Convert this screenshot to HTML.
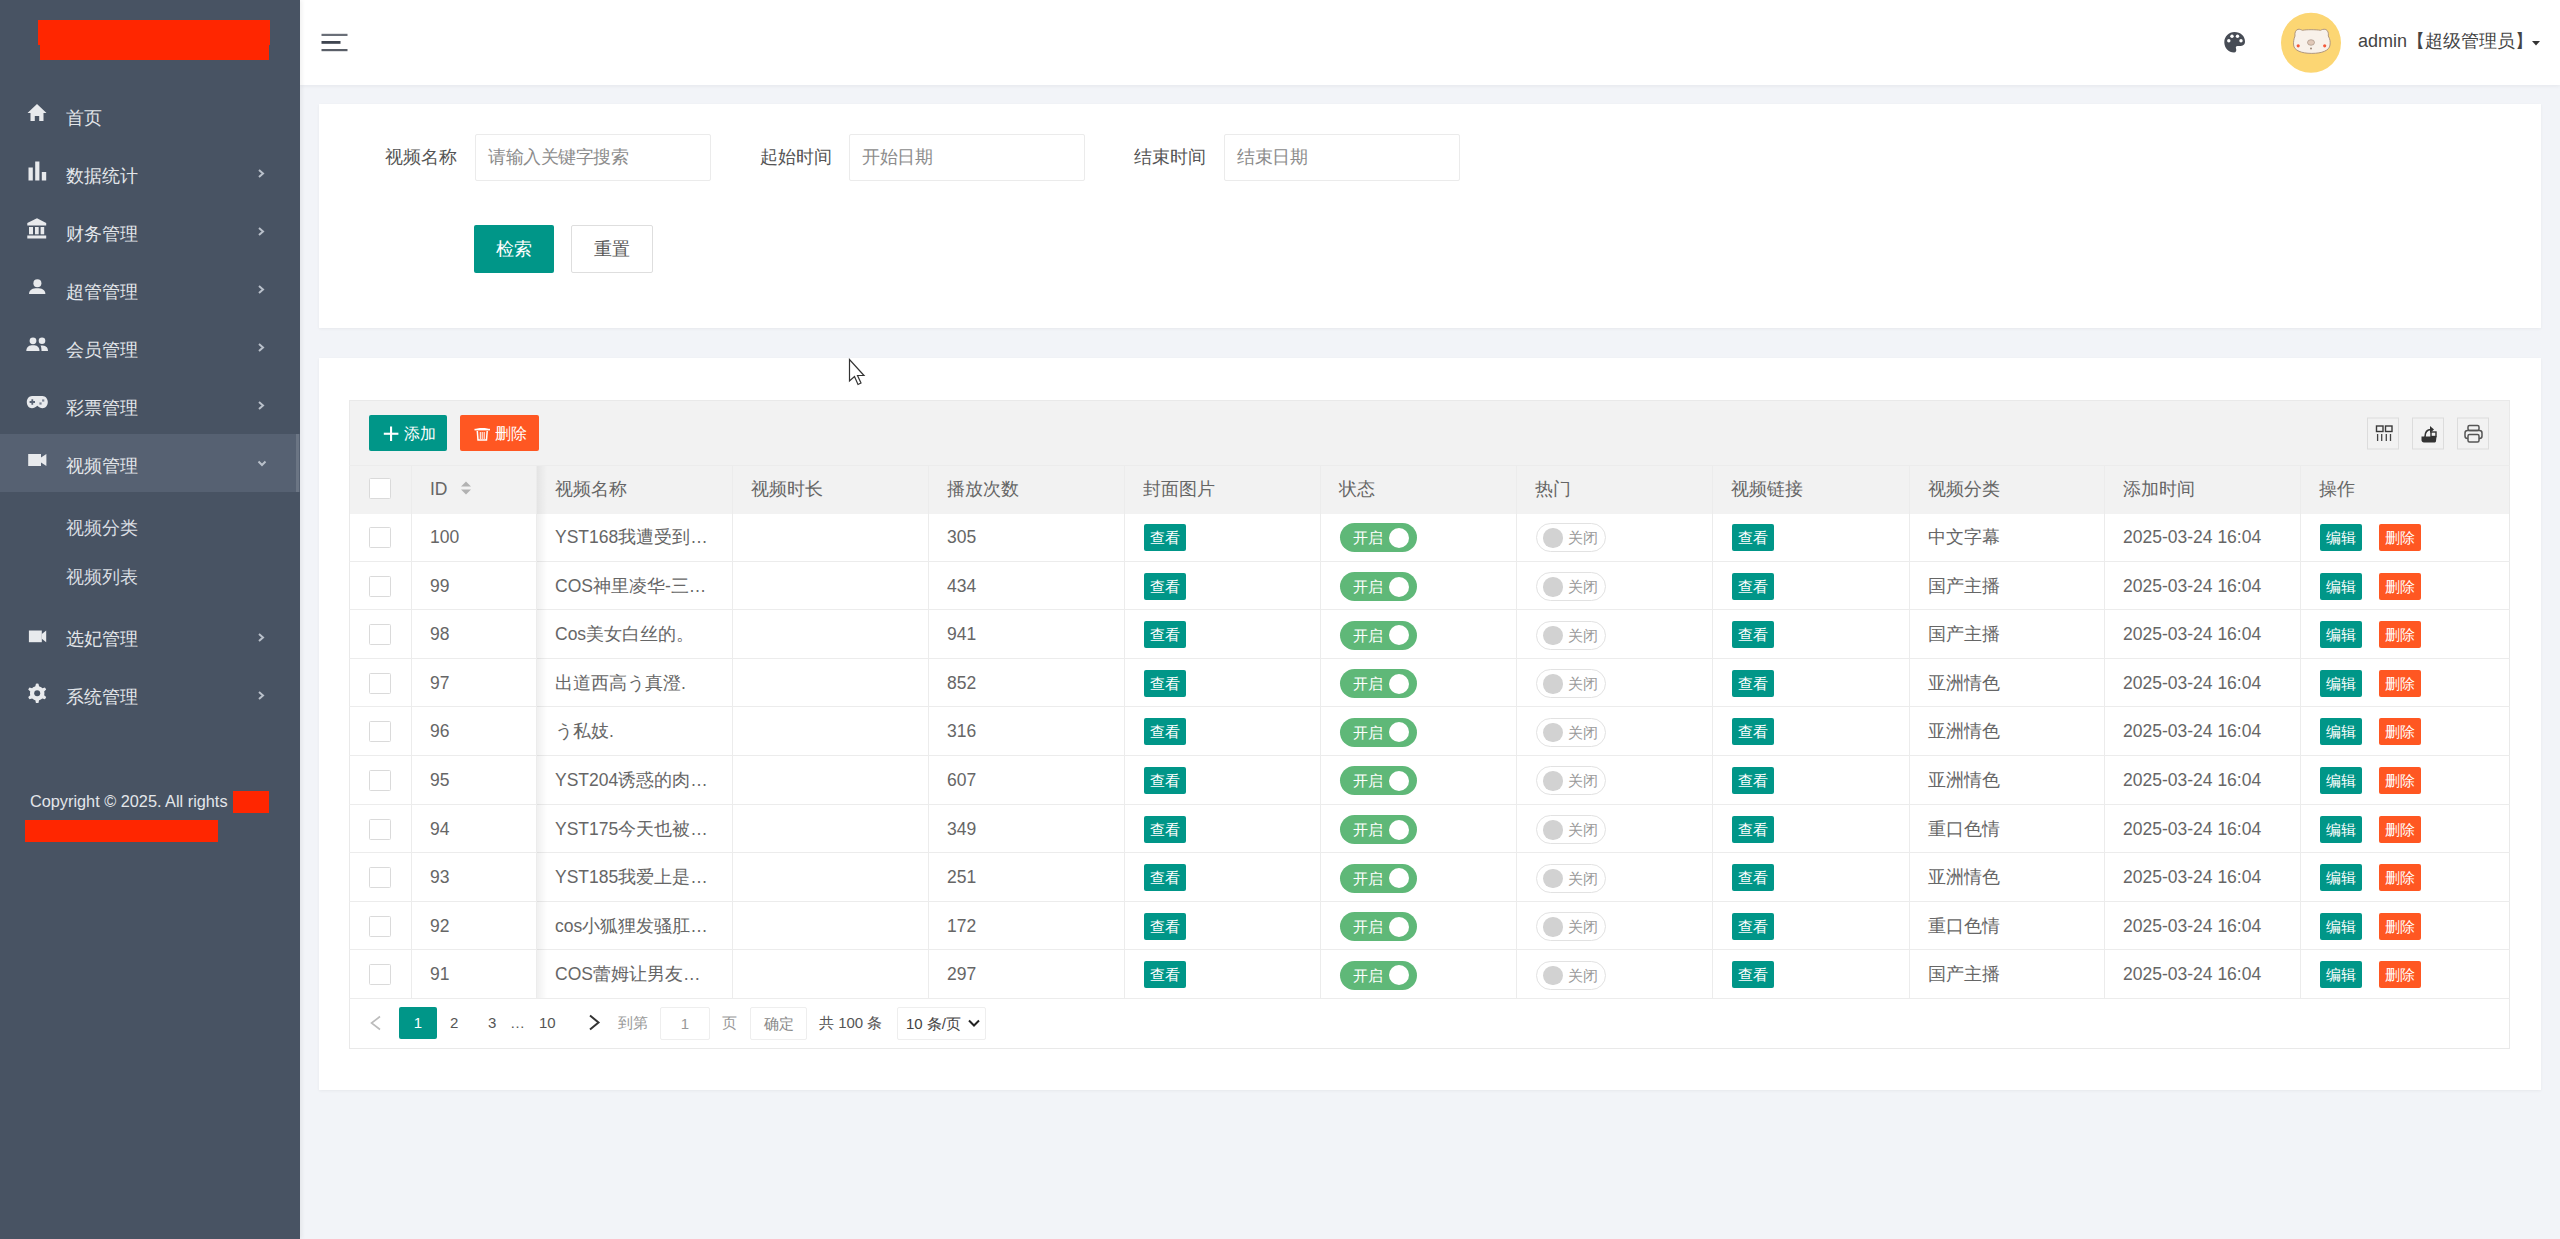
<!DOCTYPE html><html><head><meta charset="utf-8"><style>
*{box-sizing:border-box;margin:0;padding:0}
html,body{width:2560px;height:1239px;overflow:hidden;background:#f2f4f8;font-family:"Liberation Sans",sans-serif;color:#666;font-weight:300}
.a{position:absolute;white-space:nowrap}
#side{position:absolute;left:0;top:0;width:300px;height:1239px;background:#485363;box-shadow:2px 0 4px rgba(0,0,0,0.06);z-index:2}
.mi{position:absolute;left:0;width:300px;height:58px;color:#e3e6ea;font-size:18px}
.mi .t{position:absolute;left:66px;top:3px;line-height:58px;white-space:nowrap}
.mi.act{background:#566172}
.sub{position:absolute;left:66px;font-size:18px;color:#d9dde2;line-height:49px;white-space:nowrap}
#hdr{position:absolute;left:300px;top:0;width:2260px;height:85px;background:#fff;box-shadow:0 1px 4px rgba(0,21,41,0.06)}
.card{position:absolute;background:#fff;box-shadow:0 1px 3px rgba(0,0,0,0.05)}
.lbl{position:absolute;font-size:18px;color:#555;line-height:47px;white-space:nowrap}
.inp{position:absolute;height:47px;border:1px solid #ebebeb;border-radius:2px;background:#fff;font-size:17.5px;letter-spacing:-0.45px;color:#8c8c8c;line-height:45px;padding-left:12px;white-space:nowrap}
.btn{position:absolute;height:48px;line-height:48px;font-size:18px;text-align:center;border-radius:2px}
.cell{position:absolute;font-size:17.5px;color:#666;white-space:nowrap}
.badge{position:absolute;width:42px;height:27px;border-radius:2px;color:#fff;font-size:15px;line-height:27px;text-align:center}
.sw{position:absolute;height:29px;border-radius:15px;font-size:15px;line-height:29px}
.hl{position:absolute;height:1px;background:#ececec}
.vl{position:absolute;width:1px;background:#ececec}
.chk{position:absolute;width:22px;height:21px;border:1px solid #dadada;border-radius:1.5px;background:#fff}
.pg{position:absolute;font-size:15px;color:#555;white-space:nowrap}
</style></head><body>
<div id="side">
<div class="a" style="left:38px;top:20px;width:232px;height:25px;background:#ff2600"></div>
<div class="a" style="left:40px;top:40px;width:229px;height:20px;background:#ff2600"></div>
<div class="mi" style="top:86px"><span class="t">首页</span></div>
<div class="mi" style="top:144px"><span class="t">数据统计</span></div>
<div class="mi" style="top:202px"><span class="t">财务管理</span></div>
<div class="mi" style="top:260px"><span class="t">超管管理</span></div>
<div class="mi" style="top:318px"><span class="t">会员管理</span></div>
<div class="mi" style="top:376px"><span class="t">彩票管理</span></div>
<div class="mi act" style="top:434px"><span class="t">视频管理</span></div>
<div class="a" style="left:296px;top:434px;width:3px;height:58px;background:#6b7584"></div>
<div class="sub" style="top:504px">视频分类</div>
<div class="sub" style="top:553px">视频列表</div>
<div class="mi" style="top:607px"><span class="t">选妃管理</span></div>
<div class="mi" style="top:665px"><span class="t">系统管理</span></div>
<div class="a" style="left:30px;top:789px;font-size:16.3px;color:#e3e6ea;line-height:24px">Copyright © 2025. All rights</div>
<div class="a" style="left:233px;top:791px;width:36px;height:22px;background:#ff2600"></div>
<div class="a" style="left:25px;top:820px;width:193px;height:22px;background:#ff2600"></div>
<svg class="a" style="left:0;top:0" width="300" height="1239" viewBox="0 0 300 1239"><path d="M27.5 113 L37 104 L46.5 113 L43.5 113 L43.5 121 L39.2 121 L39.2 116 L34.8 116 L34.8 121 L30.5 121 L30.5 113 Z" fill="#e8eaed"/><rect x="28.5" y="167.5" width="4.3" height="13" fill="#e8eaed"/><rect x="35.2" y="161.5" width="4.2" height="19" fill="#e8eaed"/><rect x="41.8" y="172" width="4.4" height="8.5" fill="#e8eaed"/><path d="M27.3 225.4 L27.3 223 L37 218.3 L46.2 223 L46.2 225.4 Z" fill="#e8eaed"/><rect x="29" y="227" width="4" height="7.3" fill="#e8eaed"/><rect x="35" y="227" width="3.7" height="7.3" fill="#e8eaed"/><rect x="40.6" y="227" width="3.6" height="7.3" fill="#e8eaed"/><rect x="27.3" y="235.5" width="18.9" height="3" fill="#e8eaed"/><circle cx="37.4" cy="283.2" r="4" fill="#e8eaed"/><path d="M29 294 C29 289.5 33 288.3 37.2 288.3 C41.4 288.3 45.4 289.5 45.4 294 Z" fill="#e8eaed"/><circle cx="33" cy="340.8" r="3.4" fill="#e8eaed"/><circle cx="42" cy="340.8" r="3.3" fill="#e8eaed"/><path d="M26.3 351 C26.3 346.5 29.5 345.3 33 345.3 C36.5 345.3 39.5 346.5 39.5 351 Z" fill="#e8eaed"/><path d="M40.5 345.5 C44.5 345.3 48 346.3 48 351 L41.5 351 C41.5 348.5 41.2 346.8 40.5 345.5 Z" fill="#e8eaed"/><path d="M32 396 L42.5 396 C45.5 396 47.8 398.8 47.8 402 C47.8 405.5 45.5 408.2 42.5 408.2 C40.5 408.2 39 407 37.3 405.8 C35.6 407 34 408.2 32 408.2 C29 408.2 26.8 405.5 26.8 402 C26.8 398.8 29 396 32 396 Z" fill="#e8eaed"/><path d="M31.4 399.3 h1.8 v1.8 h1.8 v1.8 h-1.8 v1.8 h-1.8 v-1.8 h-1.8 v-1.8 h1.8 Z" fill="#5a6475"/><rect x="42.1" y="399.4" width="2.2" height="2.2" fill="#7a8392"/><rect x="39.4" y="402.4" width="2.2" height="2.2" fill="#7a8392"/><rect x="28.2" y="454" width="12.8" height="12" fill="#e8eaed"/><path d="M41 457.5 L46.4 454 L46.4 466 L41 462.5 Z" fill="#e8eaed"/><rect x="28.9" y="630.5" width="12.9" height="11.7" fill="#e8eaed"/><path d="M41.8 634 L46.2 630.5 L46.2 642.2 L41.8 638.7 Z" fill="#e8eaed"/><polygon points="37.20,683.60 38.47,683.68 39.06,686.35 39.96,686.65 40.80,687.06 41.58,687.59 42.29,688.21 44.90,687.40 45.60,688.45 46.16,689.59 44.15,691.44 44.34,692.36 44.40,693.30 44.34,694.24 44.15,695.16 46.16,697.01 45.60,698.15 44.90,699.20 42.29,698.39 41.58,699.01 40.80,699.54 39.96,699.95 39.06,700.25 38.47,702.92 37.20,703.00 35.93,702.92 35.34,700.25 34.44,699.95 33.60,699.54 32.82,699.01 32.11,698.39 29.50,699.20 28.80,698.15 28.24,697.01 30.25,695.16 30.06,694.24 30.00,693.30 30.06,692.36 30.25,691.44 28.24,689.59 28.80,688.45 29.50,687.40 32.11,688.21 32.82,687.59 33.60,687.06 34.44,686.65 35.34,686.35 35.93,683.68" fill="#e8eaed"/><circle cx="37.2" cy="693.3" r="3" fill="#485363"/><path d="M259 170.0 L263 173.5 L259 177.0" stroke="#b9c0ca" stroke-width="2" fill="none"/><path d="M259 228.0 L263 231.5 L259 235.0" stroke="#b9c0ca" stroke-width="2" fill="none"/><path d="M259 286.0 L263 289.5 L259 293.0" stroke="#b9c0ca" stroke-width="2" fill="none"/><path d="M259 344.0 L263 347.5 L259 351.0" stroke="#b9c0ca" stroke-width="2" fill="none"/><path d="M259 402.0 L263 405.5 L259 409.0" stroke="#b9c0ca" stroke-width="2" fill="none"/><path d="M259 634.0 L263 637.5 L259 641.0" stroke="#b9c0ca" stroke-width="2" fill="none"/><path d="M259 692.0 L263 695.5 L259 699.0" stroke="#b9c0ca" stroke-width="2" fill="none"/><path d="M258.5 461.5 L262 465 L265.5 461.5" stroke="#b9c0ca" stroke-width="2" fill="none"/></svg>
</div>
<div id="hdr"></div>
<svg class="a" style="left:0;top:0" width="2560" height="85" viewBox="0 0 2560 85"><rect x="321.5" y="33.8" width="26" height="2.2" fill="#6a6f78"/><rect x="321.5" y="41" width="19" height="2.8" fill="#3f4550"/><rect x="321.5" y="49" width="26" height="2.2" fill="#5a5f68"/><path d="M2234.5 32 C2240.5 32 2245 36 2245 41.5 C2245 45 2242.5 46 2240 46 L2237.5 46 C2236 46 2235.5 47 2236 48.5 C2236.8 50.5 2236 52.5 2234 52.5 C2228.5 52.5 2224.3 48 2224.3 42.2 C2224.3 36.5 2228.8 32 2234.5 32 Z" fill="#474c55"/><circle cx="2228.8" cy="40.8" r="1.7" fill="#fff"/><circle cx="2232" cy="36.3" r="1.7" fill="#fff"/><circle cx="2237.5" cy="36.3" r="1.7" fill="#fff"/><circle cx="2241" cy="40.8" r="1.7" fill="#fff"/><circle cx="2311" cy="42.8" r="30" fill="#fcd673"/><path d="M2295 36 C2294.5 33 2295.5 30 2298 29.3 C2300 29 2301.5 30 2302.5 30.3 C2306 29.5 2316 29.5 2320.5 30.3 C2321.5 29.8 2323.5 28.8 2325.8 29.5 C2328 30.5 2328.7 33 2328.3 36 C2330 39 2330.5 42 2330 45 C2329.5 50.5 2322 53.4 2311.8 53.4 C2301.5 53.4 2294 50.5 2293.6 45 C2293.3 42 2293.8 39 2295 36 Z" fill="#f8f1ea" stroke="#a88e78" stroke-width="0.9"/><circle cx="2298.2" cy="45.8" r="1.6" fill="#f4593a"/><circle cx="2324.7" cy="45.8" r="1.6" fill="#f4593a"/><ellipse cx="2311" cy="42.5" rx="3.5" ry="2.8" fill="#e0c8b8" stroke="#9c8878" stroke-width="0.6"/><circle cx="2311" cy="48.5" r="1" fill="#9c8878"/><path d="M2532 41 L2540 41 L2536 45.5 Z" fill="#333"/></svg>
<div class="a" style="left:2358px;top:26px;font-size:18px;color:#444;line-height:30px">admin【超级管理员】</div>
<div class="card" style="left:319px;top:104px;width:2222px;height:224px"></div>
<div class="lbl" style="left:385px;top:134px">视频名称</div>
<div class="inp" style="left:475px;top:134px;width:236px">请输入关键字搜索</div>
<div class="lbl" style="left:760px;top:134px">起始时间</div>
<div class="inp" style="left:849px;top:134px;width:236px">开始日期</div>
<div class="lbl" style="left:1134px;top:134px">结束时间</div>
<div class="inp" style="left:1224px;top:134px;width:236px">结束日期</div>
<div class="btn" style="left:474px;top:225px;width:80px;background:#009688;color:#fff">检索</div>
<div class="btn" style="left:571px;top:225px;width:82px;border:1px solid #dedede;background:#fff;color:#555;line-height:46px">重置</div>
<div class="card" style="left:319px;top:358px;width:2222px;height:732px"></div>
<div class="a" style="left:349px;top:400px;width:2161px;height:649px;border:1px solid #e9e9e9;background:#fff"></div>
<div class="a" style="left:350px;top:401px;width:2159px;height:113px;background:#f2f2f2"></div>
<div class="hl" style="left:349px;top:465px;width:2161px"></div>
<div class="a" style="left:369px;top:415px;width:78px;height:36px;background:#009688;border-radius:2px"></div>
<div class="a" style="left:460px;top:415px;width:79px;height:36px;background:#ff5722;border-radius:2px"></div>
<div class="a" style="left:404px;top:416px;font-size:15.5px;line-height:36px;color:#fff">添加</div>
<div class="a" style="left:495px;top:416px;font-size:15.5px;line-height:36px;color:#fff">删除</div>
<svg class="a" style="left:0;top:400px" width="2560" height="64" viewBox="0 400 2560 64"><rect x="383.8" y="432.7" width="14.6" height="2.1" fill="#fff"/><rect x="390" y="426.5" width="2.1" height="14.5" fill="#fff"/><path d="M474.5 429.6 C477 427.3 487.5 427.3 490 429.6 Z" fill="#fff"/><rect x="474.5" y="428.8" width="15.5" height="1.6" fill="#fff"/><path d="M477.3 431 L478 440 L486.5 440 L487.2 431" stroke="#fff" stroke-width="1.5" fill="none"/><path d="M480.3 432 v7 M482.2 432 v7 M484.2 432 v7" stroke="#fff" stroke-width="1"/><rect x="2367.5" y="418" width="31" height="31" fill="none" stroke="#dcdcdc" stroke-width="1"/><rect x="2412.5" y="418" width="31" height="31" fill="none" stroke="#dcdcdc" stroke-width="1"/><rect x="2457.5" y="418" width="31" height="31" fill="none" stroke="#dcdcdc" stroke-width="1"/><rect x="2376.5" y="426" width="6.5" height="5.5" fill="none" stroke="#3a3a3a" stroke-width="1.4"/><rect x="2385.5" y="426" width="6.5" height="5.5" fill="none" stroke="#3a3a3a" stroke-width="1.4"/><path d="M2377.6 434 v7 M2381.7 434 v7 M2386.3 434 v7 M2390.5 434 v7" stroke="#444" stroke-width="1.3"/><path d="M2421.5 436.5 L2436.5 436.5 L2436 441 C2436 442 2435 442.5 2434 442.5 L2424 442.5 C2422.5 442.5 2421.5 441.5 2421.5 440 Z" fill="#333"/><path d="M2425 437 C2425 432 2427 429.5 2431 429.5" stroke="#333" stroke-width="1.6" fill="none"/><path d="M2430 426 L2434 429.5 L2430 433 Z" fill="#333"/><rect x="2431" y="432" width="5" height="4.5" fill="none" stroke="#333" stroke-width="1.4"/><rect x="2468" y="425.5" width="11" height="5" rx="1.5" fill="none" stroke="#555" stroke-width="1.5"/><rect x="2465" y="430.5" width="17" height="8" rx="2.5" fill="none" stroke="#555" stroke-width="1.5"/><rect x="2468" y="434.5" width="11" height="7.5" rx="1.5" fill="#f2f2f2" stroke="#555" stroke-width="1.5"/></svg>
<div class="hl" style="left:349px;top:561px;width:2161px"></div>
<div class="hl" style="left:349px;top:609px;width:2161px"></div>
<div class="hl" style="left:349px;top:658px;width:2161px"></div>
<div class="hl" style="left:349px;top:706px;width:2161px"></div>
<div class="hl" style="left:349px;top:755px;width:2161px"></div>
<div class="hl" style="left:349px;top:804px;width:2161px"></div>
<div class="hl" style="left:349px;top:852px;width:2161px"></div>
<div class="hl" style="left:349px;top:901px;width:2161px"></div>
<div class="hl" style="left:349px;top:949px;width:2161px"></div>
<div class="hl" style="left:349px;top:998px;width:2161px"></div>
<div class="vl" style="left:411px;top:465px;height:533px"></div>
<div class="vl" style="left:536px;top:465px;height:533px"></div>
<div class="vl" style="left:732px;top:465px;height:533px"></div>
<div class="vl" style="left:928px;top:465px;height:533px"></div>
<div class="vl" style="left:1124px;top:465px;height:533px"></div>
<div class="vl" style="left:1320px;top:465px;height:533px"></div>
<div class="vl" style="left:1516px;top:465px;height:533px"></div>
<div class="vl" style="left:1712px;top:465px;height:533px"></div>
<div class="vl" style="left:1909px;top:465px;height:533px"></div>
<div class="vl" style="left:2104px;top:465px;height:533px"></div>
<div class="vl" style="left:2300px;top:465px;height:533px"></div>
<div class="a" style="left:537px;top:466px;width:10px;height:532px;background:linear-gradient(to right,rgba(0,0,0,0.06),rgba(0,0,0,0))"></div>
<div class="cell" style="left:430px;top:464px;line-height:50px">ID</div>
<div class="cell" style="left:555px;top:464px;line-height:50px">视频名称</div>
<div class="cell" style="left:751px;top:464px;line-height:50px">视频时长</div>
<div class="cell" style="left:947px;top:464px;line-height:50px">播放次数</div>
<div class="cell" style="left:1143px;top:464px;line-height:50px">封面图片</div>
<div class="cell" style="left:1339px;top:464px;line-height:50px">状态</div>
<div class="cell" style="left:1535px;top:464px;line-height:50px">热门</div>
<div class="cell" style="left:1731px;top:464px;line-height:50px">视频链接</div>
<div class="cell" style="left:1928px;top:464px;line-height:50px">视频分类</div>
<div class="cell" style="left:2123px;top:464px;line-height:50px">添加时间</div>
<div class="cell" style="left:2319px;top:464px;line-height:50px">操作</div>
<div class="chk" style="left:369px;top:478px"></div>
<svg class="a" style="left:459px;top:478px" width="14" height="20" viewBox="0 0 14 20"><path d="M2 8.5 L7 3.5 L12 8.5 Z M2 11.5 L7 16.5 L12 11.5 Z" fill="#b2b2b2"/></svg>
<div class="chk" style="left:369px;top:526.9px"></div>
<div class="cell" style="left:430px;top:512.0px;line-height:50px">100</div>
<div class="cell" style="left:555px;top:512.0px;line-height:50px">YST168我遭受到…</div>
<div class="cell" style="left:947px;top:512.0px;line-height:50px">305</div>
<div class="cell" style="left:1928px;top:512.0px;line-height:50px">中文字幕</div>
<div class="cell" style="left:2123px;top:512.0px;line-height:50px">2025-03-24 16:04</div>
<div class="badge" style="left:1144px;top:523.9px;background:#009688">查看</div>
<div class="badge" style="left:1732px;top:523.9px;background:#009688">查看</div>
<div class="badge" style="left:2320px;top:523.9px;background:#009688">编辑</div>
<div class="badge" style="left:2379px;top:523.9px;background:#ff5722">删除</div>
<div class="sw" style="left:1340px;top:523.4px;width:77px;background:#5fb878;color:#fff;padding-left:13px">开启<span class="a" style="left:49px;top:4.5px;width:20px;height:20px;border-radius:50%;background:#fff"></span></div>
<div class="sw" style="left:1536px;top:523.4px;width:70px;background:#fff;border:1px solid #e2e2e2;color:#999;padding-left:31px;line-height:27px">关闭<span class="a" style="left:6px;top:4px;width:19.5px;height:19.5px;border-radius:50%;background:#d2d2d2"></span></div>
<div class="chk" style="left:369px;top:575.5px"></div>
<div class="cell" style="left:430px;top:560.6px;line-height:50px">99</div>
<div class="cell" style="left:555px;top:560.6px;line-height:50px">COS神里凌华-三…</div>
<div class="cell" style="left:947px;top:560.6px;line-height:50px">434</div>
<div class="cell" style="left:1928px;top:560.6px;line-height:50px">国产主播</div>
<div class="cell" style="left:2123px;top:560.6px;line-height:50px">2025-03-24 16:04</div>
<div class="badge" style="left:1144px;top:572.5px;background:#009688">查看</div>
<div class="badge" style="left:1732px;top:572.5px;background:#009688">查看</div>
<div class="badge" style="left:2320px;top:572.5px;background:#009688">编辑</div>
<div class="badge" style="left:2379px;top:572.5px;background:#ff5722">删除</div>
<div class="sw" style="left:1340px;top:572.0px;width:77px;background:#5fb878;color:#fff;padding-left:13px">开启<span class="a" style="left:49px;top:4.5px;width:20px;height:20px;border-radius:50%;background:#fff"></span></div>
<div class="sw" style="left:1536px;top:572.0px;width:70px;background:#fff;border:1px solid #e2e2e2;color:#999;padding-left:31px;line-height:27px">关闭<span class="a" style="left:6px;top:4px;width:19.5px;height:19.5px;border-radius:50%;background:#d2d2d2"></span></div>
<div class="chk" style="left:369px;top:624.1px"></div>
<div class="cell" style="left:430px;top:609.2px;line-height:50px">98</div>
<div class="cell" style="left:555px;top:609.2px;line-height:50px">Cos美女白丝的。</div>
<div class="cell" style="left:947px;top:609.2px;line-height:50px">941</div>
<div class="cell" style="left:1928px;top:609.2px;line-height:50px">国产主播</div>
<div class="cell" style="left:2123px;top:609.2px;line-height:50px">2025-03-24 16:04</div>
<div class="badge" style="left:1144px;top:621.1px;background:#009688">查看</div>
<div class="badge" style="left:1732px;top:621.1px;background:#009688">查看</div>
<div class="badge" style="left:2320px;top:621.1px;background:#009688">编辑</div>
<div class="badge" style="left:2379px;top:621.1px;background:#ff5722">删除</div>
<div class="sw" style="left:1340px;top:620.6px;width:77px;background:#5fb878;color:#fff;padding-left:13px">开启<span class="a" style="left:49px;top:4.5px;width:20px;height:20px;border-radius:50%;background:#fff"></span></div>
<div class="sw" style="left:1536px;top:620.6px;width:70px;background:#fff;border:1px solid #e2e2e2;color:#999;padding-left:31px;line-height:27px">关闭<span class="a" style="left:6px;top:4px;width:19.5px;height:19.5px;border-radius:50%;background:#d2d2d2"></span></div>
<div class="chk" style="left:369px;top:672.7px"></div>
<div class="cell" style="left:430px;top:657.8px;line-height:50px">97</div>
<div class="cell" style="left:555px;top:657.8px;line-height:50px">出道西高う真澄.</div>
<div class="cell" style="left:947px;top:657.8px;line-height:50px">852</div>
<div class="cell" style="left:1928px;top:657.8px;line-height:50px">亚洲情色</div>
<div class="cell" style="left:2123px;top:657.8px;line-height:50px">2025-03-24 16:04</div>
<div class="badge" style="left:1144px;top:669.7px;background:#009688">查看</div>
<div class="badge" style="left:1732px;top:669.7px;background:#009688">查看</div>
<div class="badge" style="left:2320px;top:669.7px;background:#009688">编辑</div>
<div class="badge" style="left:2379px;top:669.7px;background:#ff5722">删除</div>
<div class="sw" style="left:1340px;top:669.2px;width:77px;background:#5fb878;color:#fff;padding-left:13px">开启<span class="a" style="left:49px;top:4.5px;width:20px;height:20px;border-radius:50%;background:#fff"></span></div>
<div class="sw" style="left:1536px;top:669.2px;width:70px;background:#fff;border:1px solid #e2e2e2;color:#999;padding-left:31px;line-height:27px">关闭<span class="a" style="left:6px;top:4px;width:19.5px;height:19.5px;border-radius:50%;background:#d2d2d2"></span></div>
<div class="chk" style="left:369px;top:721.3px"></div>
<div class="cell" style="left:430px;top:706.4px;line-height:50px">96</div>
<div class="cell" style="left:555px;top:706.4px;line-height:50px">う私妓.</div>
<div class="cell" style="left:947px;top:706.4px;line-height:50px">316</div>
<div class="cell" style="left:1928px;top:706.4px;line-height:50px">亚洲情色</div>
<div class="cell" style="left:2123px;top:706.4px;line-height:50px">2025-03-24 16:04</div>
<div class="badge" style="left:1144px;top:718.3px;background:#009688">查看</div>
<div class="badge" style="left:1732px;top:718.3px;background:#009688">查看</div>
<div class="badge" style="left:2320px;top:718.3px;background:#009688">编辑</div>
<div class="badge" style="left:2379px;top:718.3px;background:#ff5722">删除</div>
<div class="sw" style="left:1340px;top:717.8px;width:77px;background:#5fb878;color:#fff;padding-left:13px">开启<span class="a" style="left:49px;top:4.5px;width:20px;height:20px;border-radius:50%;background:#fff"></span></div>
<div class="sw" style="left:1536px;top:717.8px;width:70px;background:#fff;border:1px solid #e2e2e2;color:#999;padding-left:31px;line-height:27px">关闭<span class="a" style="left:6px;top:4px;width:19.5px;height:19.5px;border-radius:50%;background:#d2d2d2"></span></div>
<div class="chk" style="left:369px;top:769.9px"></div>
<div class="cell" style="left:430px;top:755.0px;line-height:50px">95</div>
<div class="cell" style="left:555px;top:755.0px;line-height:50px">YST204诱惑的肉…</div>
<div class="cell" style="left:947px;top:755.0px;line-height:50px">607</div>
<div class="cell" style="left:1928px;top:755.0px;line-height:50px">亚洲情色</div>
<div class="cell" style="left:2123px;top:755.0px;line-height:50px">2025-03-24 16:04</div>
<div class="badge" style="left:1144px;top:766.9px;background:#009688">查看</div>
<div class="badge" style="left:1732px;top:766.9px;background:#009688">查看</div>
<div class="badge" style="left:2320px;top:766.9px;background:#009688">编辑</div>
<div class="badge" style="left:2379px;top:766.9px;background:#ff5722">删除</div>
<div class="sw" style="left:1340px;top:766.4px;width:77px;background:#5fb878;color:#fff;padding-left:13px">开启<span class="a" style="left:49px;top:4.5px;width:20px;height:20px;border-radius:50%;background:#fff"></span></div>
<div class="sw" style="left:1536px;top:766.4px;width:70px;background:#fff;border:1px solid #e2e2e2;color:#999;padding-left:31px;line-height:27px">关闭<span class="a" style="left:6px;top:4px;width:19.5px;height:19.5px;border-radius:50%;background:#d2d2d2"></span></div>
<div class="chk" style="left:369px;top:818.5px"></div>
<div class="cell" style="left:430px;top:803.6px;line-height:50px">94</div>
<div class="cell" style="left:555px;top:803.6px;line-height:50px">YST175今天也被…</div>
<div class="cell" style="left:947px;top:803.6px;line-height:50px">349</div>
<div class="cell" style="left:1928px;top:803.6px;line-height:50px">重口色情</div>
<div class="cell" style="left:2123px;top:803.6px;line-height:50px">2025-03-24 16:04</div>
<div class="badge" style="left:1144px;top:815.5px;background:#009688">查看</div>
<div class="badge" style="left:1732px;top:815.5px;background:#009688">查看</div>
<div class="badge" style="left:2320px;top:815.5px;background:#009688">编辑</div>
<div class="badge" style="left:2379px;top:815.5px;background:#ff5722">删除</div>
<div class="sw" style="left:1340px;top:815.0px;width:77px;background:#5fb878;color:#fff;padding-left:13px">开启<span class="a" style="left:49px;top:4.5px;width:20px;height:20px;border-radius:50%;background:#fff"></span></div>
<div class="sw" style="left:1536px;top:815.0px;width:70px;background:#fff;border:1px solid #e2e2e2;color:#999;padding-left:31px;line-height:27px">关闭<span class="a" style="left:6px;top:4px;width:19.5px;height:19.5px;border-radius:50%;background:#d2d2d2"></span></div>
<div class="chk" style="left:369px;top:867.1px"></div>
<div class="cell" style="left:430px;top:852.2px;line-height:50px">93</div>
<div class="cell" style="left:555px;top:852.2px;line-height:50px">YST185我爱上是…</div>
<div class="cell" style="left:947px;top:852.2px;line-height:50px">251</div>
<div class="cell" style="left:1928px;top:852.2px;line-height:50px">亚洲情色</div>
<div class="cell" style="left:2123px;top:852.2px;line-height:50px">2025-03-24 16:04</div>
<div class="badge" style="left:1144px;top:864.1px;background:#009688">查看</div>
<div class="badge" style="left:1732px;top:864.1px;background:#009688">查看</div>
<div class="badge" style="left:2320px;top:864.1px;background:#009688">编辑</div>
<div class="badge" style="left:2379px;top:864.1px;background:#ff5722">删除</div>
<div class="sw" style="left:1340px;top:863.6px;width:77px;background:#5fb878;color:#fff;padding-left:13px">开启<span class="a" style="left:49px;top:4.5px;width:20px;height:20px;border-radius:50%;background:#fff"></span></div>
<div class="sw" style="left:1536px;top:863.6px;width:70px;background:#fff;border:1px solid #e2e2e2;color:#999;padding-left:31px;line-height:27px">关闭<span class="a" style="left:6px;top:4px;width:19.5px;height:19.5px;border-radius:50%;background:#d2d2d2"></span></div>
<div class="chk" style="left:369px;top:915.7px"></div>
<div class="cell" style="left:430px;top:900.8px;line-height:50px">92</div>
<div class="cell" style="left:555px;top:900.8px;line-height:50px">cos小狐狸发骚肛…</div>
<div class="cell" style="left:947px;top:900.8px;line-height:50px">172</div>
<div class="cell" style="left:1928px;top:900.8px;line-height:50px">重口色情</div>
<div class="cell" style="left:2123px;top:900.8px;line-height:50px">2025-03-24 16:04</div>
<div class="badge" style="left:1144px;top:912.7px;background:#009688">查看</div>
<div class="badge" style="left:1732px;top:912.7px;background:#009688">查看</div>
<div class="badge" style="left:2320px;top:912.7px;background:#009688">编辑</div>
<div class="badge" style="left:2379px;top:912.7px;background:#ff5722">删除</div>
<div class="sw" style="left:1340px;top:912.2px;width:77px;background:#5fb878;color:#fff;padding-left:13px">开启<span class="a" style="left:49px;top:4.5px;width:20px;height:20px;border-radius:50%;background:#fff"></span></div>
<div class="sw" style="left:1536px;top:912.2px;width:70px;background:#fff;border:1px solid #e2e2e2;color:#999;padding-left:31px;line-height:27px">关闭<span class="a" style="left:6px;top:4px;width:19.5px;height:19.5px;border-radius:50%;background:#d2d2d2"></span></div>
<div class="chk" style="left:369px;top:964.3px"></div>
<div class="cell" style="left:430px;top:949.4px;line-height:50px">91</div>
<div class="cell" style="left:555px;top:949.4px;line-height:50px">COS蕾姆让男友…</div>
<div class="cell" style="left:947px;top:949.4px;line-height:50px">297</div>
<div class="cell" style="left:1928px;top:949.4px;line-height:50px">国产主播</div>
<div class="cell" style="left:2123px;top:949.4px;line-height:50px">2025-03-24 16:04</div>
<div class="badge" style="left:1144px;top:961.3px;background:#009688">查看</div>
<div class="badge" style="left:1732px;top:961.3px;background:#009688">查看</div>
<div class="badge" style="left:2320px;top:961.3px;background:#009688">编辑</div>
<div class="badge" style="left:2379px;top:961.3px;background:#ff5722">删除</div>
<div class="sw" style="left:1340px;top:960.8px;width:77px;background:#5fb878;color:#fff;padding-left:13px">开启<span class="a" style="left:49px;top:4.5px;width:20px;height:20px;border-radius:50%;background:#fff"></span></div>
<div class="sw" style="left:1536px;top:960.8px;width:70px;background:#fff;border:1px solid #e2e2e2;color:#999;padding-left:31px;line-height:27px">关闭<span class="a" style="left:6px;top:4px;width:19.5px;height:19.5px;border-radius:50%;background:#d2d2d2"></span></div>
<svg class="a" style="left:360px;top:1000px" width="260" height="45" viewBox="360 1000 260 45"><path d="M380 1016.5 L371.5 1023 L380 1029.5" stroke="#bbb" stroke-width="1.6" fill="none"/><path d="M590 1015.5 L598.5 1022.5 L590 1029.5" stroke="#333" stroke-width="2" fill="none"/></svg>
<div class="a" style="left:399px;top:1007px;width:38px;height:32px;background:#009688;border-radius:2px;color:#fff;font-size:15px;line-height:32px;text-align:center">1</div>
<div class="pg" style="left:450px;top:1007px;line-height:32px">2</div>
<div class="pg" style="left:488px;top:1007px;line-height:32px">3</div>
<div class="pg" style="left:510px;top:1007px;line-height:32px">…</div>
<div class="pg" style="left:539px;top:1007px;line-height:32px">10</div>
<div class="pg" style="left:618px;top:1007px;line-height:32px;color:#999">到第</div>
<div class="a" style="left:660px;top:1007px;width:50px;height:33px;border:1px solid #eeeeee;border-radius:2px;font-size:15px;line-height:31px;text-align:center;color:#999">1</div>
<div class="pg" style="left:722px;top:1007px;line-height:32px;color:#999">页</div>
<div class="a" style="left:750px;top:1007px;width:57px;height:33px;border:1px solid #eeeeee;border-radius:2px;font-size:15px;line-height:31px;text-align:center;color:#888">确定</div>
<div class="pg" style="left:819px;top:1007px;line-height:32px;color:#555">共 100 条</div>
<div class="a" style="left:897px;top:1007px;width:89px;height:33px;border:1px solid #eeeeee;border-radius:2px;font-size:15px;line-height:31px;padding-left:8px;color:#444">10 条/页</div>
<svg class="a" style="left:966px;top:1015px" width="16" height="16" viewBox="0 0 16 16"><path d="M3 5.5 L8 10.5 L13 5.5" stroke="#222" stroke-width="2" fill="none"/></svg>
<svg class="a" style="left:848px;top:358px" width="24" height="32" viewBox="0 0 24 32"><path d="M1.5 1.5 L1.5 23 L6.5 18.5 L10 26.5 L13 25 L9.5 17.5 L16 17.5 Z" fill="#fff" stroke="#333" stroke-width="1.2"/></svg>
</body></html>
